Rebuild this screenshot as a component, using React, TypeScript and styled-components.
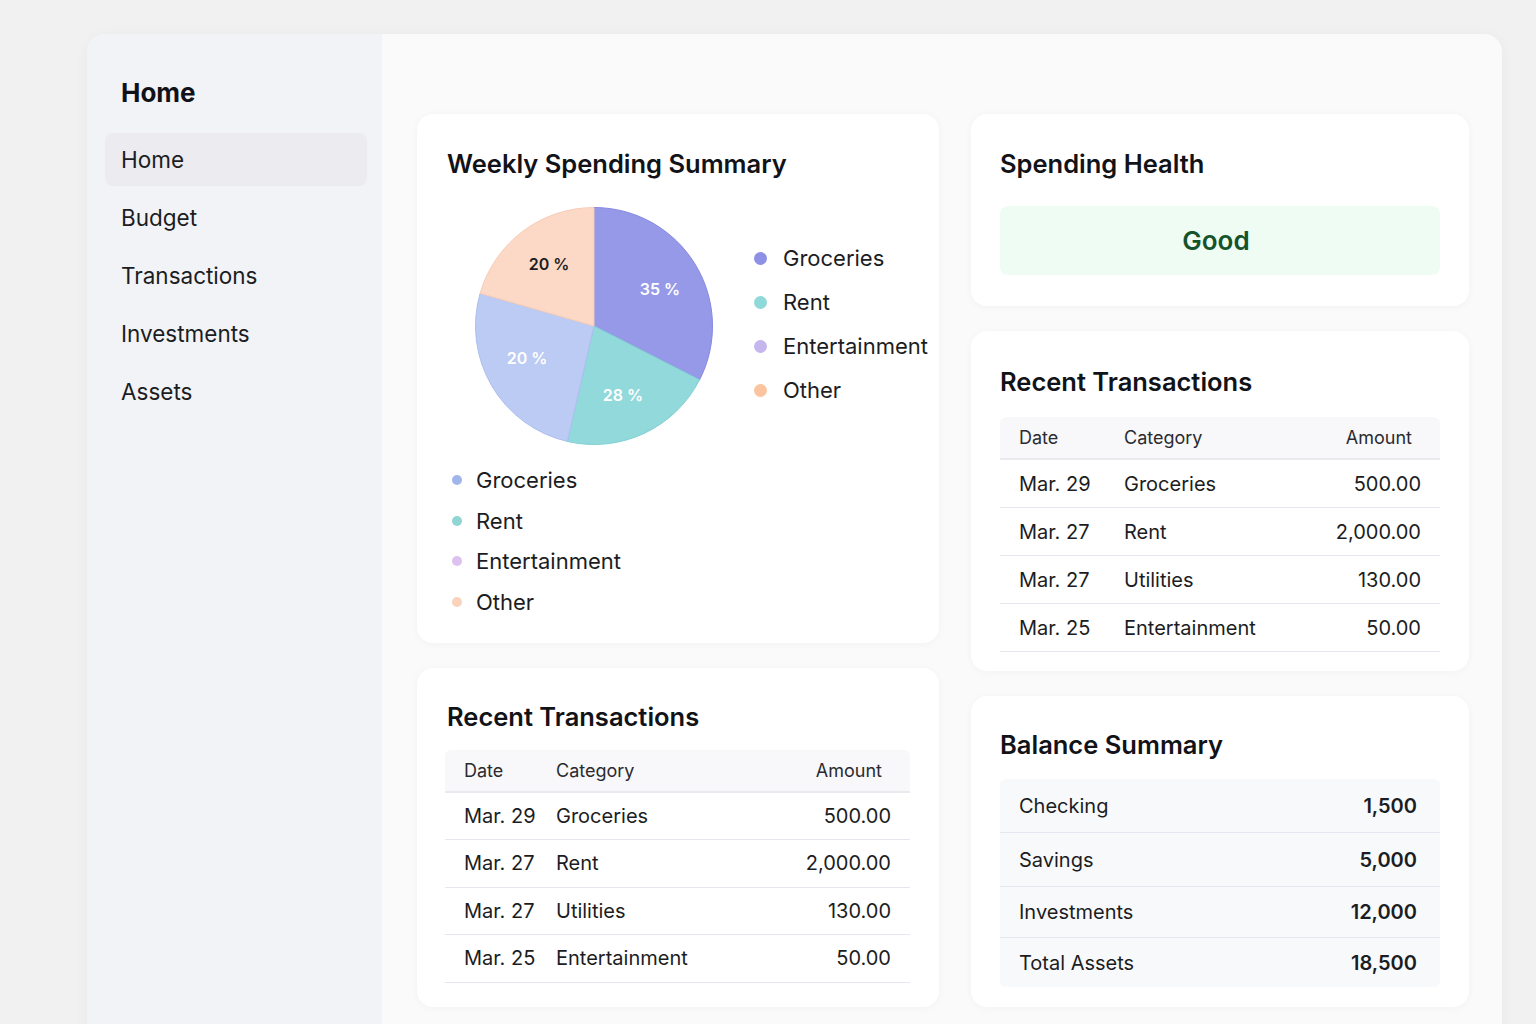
import * as React from "react";
import styled, { createGlobalStyle } from "styled-components";

const GlobalStyle = createGlobalStyle`
  html, body {
    margin: 0;
    padding: 0;
    overflow: hidden;
    background: #f1f1f2;
    font-family: Inter, "Noto Sans", "Liberation Sans", sans-serif;
    color: #17181c;
  }
  * { box-sizing: border-box; }
`;

const Page = styled.div`
  padding: 34px 34px 0 87px;
`;

const Shell = styled.article`
  display: grid;
  grid-template-columns: 295px 1fr;
  width: 1415px;
  min-height: 1010px;
  border-radius: 18px;
  overflow: hidden;
  background: #fafafa;
  box-shadow: 0 2px 14px rgba(0, 0, 0, 0.04);
`;

const Sidebar = styled.nav`
  background: #f2f3f7;
  padding: 43px 15px 0 18px;
  display: flex;
  flex-direction: column;
`;

const SideTitle = styled.h1`
  margin: 0 0 24px 16px;
  font-size: 26px;
  line-height: 32px;
  font-weight: 700;
  color: #111217;
`;

const NavList = styled.div`
  display: flex;
  flex-direction: column;
  gap: 5px;
`;

const NavItem = styled.div<{ $active?: boolean }>`
  height: 53px;
  display: flex;
  align-items: center;
  padding-left: 16px;
  border-radius: 8px;
  font-size: 22.5px;
  color: #1c1d22;
  background: ${(p) => (p.$active ? "#ebebf0" : "transparent")};
`;

const Main = styled.main`
  display: grid;
  grid-template-columns: 522px 498px;
  gap: 32px;
  align-items: start;
  padding: 80px 33px 16px 35px;
`;

const Column = styled.div`
  display: flex;
  flex-direction: column;
  gap: 25px;
`;

const Card = styled.section<{ $pad?: string }>`
  background: #ffffff;
  border-radius: 16px;
  box-shadow: 0 1px 8px rgba(20, 20, 40, 0.035);
  padding: ${(p) => p.$pad || "32px 29px 28px"};
`;

const CardTitle = styled.h2<{ $gap?: number; $indent?: number }>`
  margin: 0 0 ${(p) => p.$gap ?? 18}px ${(p) => p.$indent ?? 0}px;
  font-size: 25.5px;
  line-height: 32px;
  font-weight: 600;
  color: #121318;
`;

const ChartRow = styled.div`
  display: flex;
  align-items: center;
  gap: 40px;
  padding: 10px 0 0 27px;

  svg {
    flex: none;
  }
`;

const Legend = styled.div<{ $gap: number }>`
  display: flex;
  flex-direction: column;
  gap: ${(p) => p.$gap}px;
`;

const RightLegend = styled(Legend)`
  margin-top: -4px;
`;

const LegendItem = styled.div<{ $indent: number }>`
  display: flex;
  align-items: center;
  gap: ${(p) => p.$indent}px;
  font-size: 22px;
  line-height: 28px;
  color: #1c1d22;
  white-space: nowrap;
`;

const Dot = styled.span<{ $color: string; $size: number }>`
  width: ${(p) => p.$size}px;
  height: ${(p) => p.$size}px;
  border-radius: 50%;
  background: ${(p) => p.$color};
  flex: none;
`;

const BottomLegend = styled(Legend)`
  padding: 20px 0 0 5px;
`;

const Table = styled.div`
  display: flex;
  flex-direction: column;
`;

const HeadRow = styled.div<{ $dateCol: number }>`
  display: grid;
  grid-template-columns: ${(p) => p.$dateCol}px 1fr auto;
  align-items: center;
  height: 43px;
  padding: 0 28px 0 19px;
  background: #f8f8fa;
  border-radius: 6px 6px 0 0;
  border-bottom: 2px solid #e8eaf0;
  font-size: 18px;
  color: #2a2b30;
`;

const BodyRow = styled.div<{ $dateCol: number; $h: number }>`
  display: grid;
  grid-template-columns: ${(p) => p.$dateCol}px 1fr auto;
  align-items: center;
  height: ${(p) => p.$h}px;
  padding: 0 19px;
  border-bottom: 1px solid #e4e7ee;
  font-size: 20px;
  color: #1c1d22;
`;

const Amount = styled.span`
  text-align: right;
`;

const HealthBox = styled.div`
  height: 69px;
  display: flex;
  align-items: center;
  justify-content: center;
  padding-right: 8px;
  background: #effcf4;
  border-radius: 8px;
  font-size: 26px;
  font-weight: 600;
  color: #14532b;
`;

const BalanceTable = styled.div`
  background: #f8f9fb;
  border-radius: 6px;
  display: flex;
  flex-direction: column;
`;

const BalanceRow = styled.div<{ $h: number; $last?: boolean }>`
  height: ${(p) => p.$h}px;
  display: flex;
  align-items: center;
  justify-content: space-between;
  padding: 0 23px 0 19px;
  border-bottom: ${(p) => (p.$last ? "none" : "1px solid #e4e7f0")};
  font-size: 20px;
  color: #1c1d22;
`;

const BalanceValue = styled.span`
  font-weight: 600;
`;

const slices = [
  { from: 0, to: 117, fill: "#9699e8", stroke: "#8588e2", label: "35 %", lx: 66, ly: -37, light: true },
  { from: 117, to: 193, fill: "#91d9db", stroke: "#82d0d3", label: "28 %", lx: 29, ly: 69, light: true },
  { from: 193, to: 286, fill: "#bccbf3", stroke: "#aebfef", label: "20 %", lx: -67, ly: 32, light: true },
  { from: 286, to: 360, fill: "#fcd9c6", stroke: "#f7ccb4", label: "20 %", lx: -45, ly: -62, light: false },
];

function point(cx: number, cy: number, r: number, deg: number) {
  const a = (deg * Math.PI) / 180;
  return [cx + r * Math.sin(a), cy - r * Math.cos(a)];
}

function Pie() {
  const c = 120;
  const r = 118.5;
  return (
    <svg width="240" height="240" viewBox="0 0 240 240">
      {slices.map((s, i) => {
        const [x1, y1] = point(c, c, r, s.from);
        const [x2, y2] = point(c, c, r, s.to);
        const large = s.to - s.from > 180 ? 1 : 0;
        return (
          <path
            key={i}
            d={`M${c} ${c} L${x1} ${y1} A${r} ${r} 0 ${large} 1 ${x2} ${y2} Z`}
            fill={s.fill}
            stroke={s.stroke}
            strokeWidth="1"
          />
        );
      })}
      {slices.map((s, i) => (
        <text
          key={"t" + i}
          x={c + s.lx}
          y={c + s.ly}
          textAnchor="middle"
          dominantBaseline="central"
          fontFamily="Inter, sans-serif"
          fontSize="16"
          fontWeight="600"
          fill={s.light ? "#ffffff" : "#1c1d22"}
        >
          {s.label}
        </text>
      ))}
    </svg>
  );
}

const rightLegend = [
  { name: "Groceries", color: "#8e90e6" },
  { name: "Rent", color: "#8fd9d8" },
  { name: "Entertainment", color: "#c5b6ee" },
  { name: "Other", color: "#fbc49f" },
];

const lowerLegend = [
  { name: "Groceries", color: "#a0b5ec" },
  { name: "Rent", color: "#8fd5d4" },
  { name: "Entertainment", color: "#ddc2ef" },
  { name: "Other", color: "#fbd2bb" },
];

const transactions = [
  { date: "Mar. 29", cat: "Groceries", amt: "500.00" },
  { date: "Mar. 27", cat: "Rent", amt: "2,000.00" },
  { date: "Mar. 27", cat: "Utilities", amt: "130.00" },
  { date: "Mar. 25", cat: "Entertainment", amt: "50.00" },
];

const balances = [
  { name: "Checking", value: "1,500", h: 54 },
  { name: "Savings", value: "5,000", h: 54 },
  { name: "Investments", value: "12,000", h: 51 },
  { name: "Total Assets", value: "18,500", h: 49 },
];

function Transactions(props: { dateCol: number; rowH: number }) {
  return (
    <Table>
      <HeadRow $dateCol={props.dateCol}>
        <span>Date</span>
        <span>Category</span>
        <Amount>Amount</Amount>
      </HeadRow>
      {transactions.map((t, i) => (
        <BodyRow key={i} $dateCol={props.dateCol} $h={props.rowH}>
          <span>{t.date}</span>
          <span>{t.cat}</span>
          <Amount>{t.amt}</Amount>
        </BodyRow>
      ))}
    </Table>
  );
}

export default function App() {
  return (
    <Page>
      <GlobalStyle />
      <Shell>
        <Sidebar>
          <SideTitle>Home</SideTitle>
          <NavList>
            <NavItem $active>Home</NavItem>
            <NavItem>Budget</NavItem>
            <NavItem>Transactions</NavItem>
            <NavItem>Investments</NavItem>
            <NavItem>Assets</NavItem>
          </NavList>
        </Sidebar>
        <Main>
          <Column>
            <Card $pad="34px 29px 27px 30px">
              <CardTitle $gap={16}>Weekly Spending Summary</CardTitle>
              <ChartRow>
                <Pie />
                <RightLegend $gap={16}>
                  {rightLegend.map((l) => (
                    <LegendItem key={l.name} $indent={16}>
                      <Dot $color={l.color} $size={13} />
                      {l.name}
                    </LegendItem>
                  ))}
                </RightLegend>
              </ChartRow>
              <BottomLegend $gap={12.5}>
                {lowerLegend.map((l) => (
                  <LegendItem key={l.name} $indent={14}>
                    <Dot $color={l.color} $size={10} />
                    {l.name}
                  </LegendItem>
                ))}
              </BottomLegend>
            </Card>
            <Card $pad="33px 29px 24px 28px">
              <CardTitle $gap={17} $indent={2}>Recent Transactions</CardTitle>
              <Transactions dateCol={92} rowH={47.5} />
            </Card>
          </Column>
          <Column>
            <Card $pad="34px 29px 31px">
              <CardTitle $gap={26}>Spending Health</CardTitle>
              <HealthBox>Good</HealthBox>
            </Card>
            <Card $pad="35px 29px 19px">
              <CardTitle $gap={19}>Recent Transactions</CardTitle>
              <Transactions dateCol={105} rowH={48} />
            </Card>
            <Card $pad="33px 29px 20px">
              <CardTitle $gap={18}>Balance Summary</CardTitle>
              <BalanceTable>
                {balances.map((b, i) => (
                  <BalanceRow key={b.name} $h={b.h} $last={i === balances.length - 1}>
                    <span>{b.name}</span>
                    <BalanceValue>{b.value}</BalanceValue>
                  </BalanceRow>
                ))}
              </BalanceTable>
            </Card>
          </Column>
        </Main>
      </Shell>
    </Page>
  );
}
